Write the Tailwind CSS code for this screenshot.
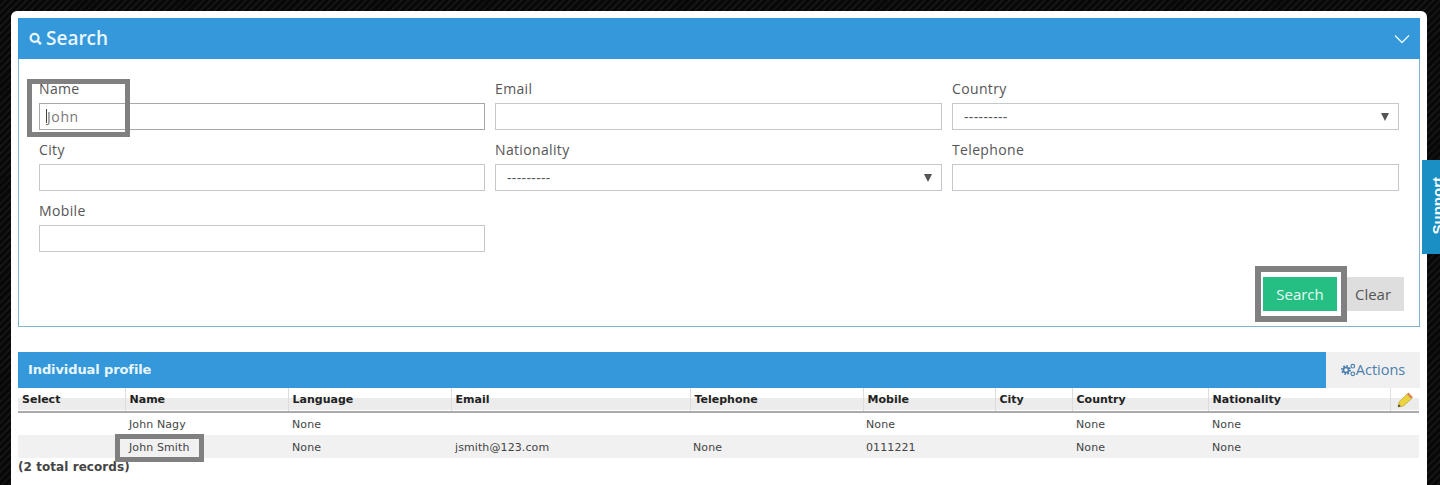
<!DOCTYPE html>
<html lang="en">
<head>
  <meta charset="UTF-8" />
  <meta name="viewport" content="width=device-width, initial-scale=1.0" />
  <title>Individual profile search</title>
  <script src="https://cdn.jsdelivr.net/npm/@tailwindcss/browser@4"></script>
</head>
<body class="bg-[#0a0a0a] bg-[repeating-linear-gradient(135deg,#080808_0px,#080808_3px,#141414_3px,#141414_5px)] font-['Open_Sans',sans-serif]">

  <div class="relative h-[485px] w-[1440px] overflow-hidden pl-[11px] pt-[11px]">
    <div class="h-[474px] w-[1416px] rounded-t-[6px] bg-white px-[7px] pt-[7px]">

      <!-- search panel -->
      <section class="relative h-[309px] w-[1402px] border border-t-0 border-[#7fb3cf]">
        <div class="-ml-px flex h-[41px] w-[1402px] items-center justify-between bg-[#3498db] pl-[11px] pr-[10px] text-[#e8f6fd]">
          <div class="flex items-center gap-[4px]">
            <svg class="h-[13px] w-[13px]" viewBox="0 0 13 13" fill="none" stroke="currentColor">
              <circle cx="5.6" cy="5.8" r="4" stroke-width="2.2" />
              <path d="M8.6 8.8 L12 12.2" stroke-width="2.6" />
            </svg>
            <span class="text-[19px] leading-none font-semibold">Search</span>
          </div>
          <svg class="h-[10px] w-[16px]" viewBox="0 0 16 10" fill="none" stroke="currentColor" stroke-width="1.4">
            <path d="M1 1.5 L8 8.5 L15 1.5" />
          </svg>
        </div>

        <div class="grid grid-cols-[446px_447px_447px] gap-x-[10px] gap-y-[10px] pl-[20px] pt-[20px] text-[14px] leading-[20px] tracking-[.35px] text-[#555]">
          <div>
            <label class="mb-[4px] block">Name</label>
            <div class="h-[27px] border border-[#a3a9ad] bg-white pl-[7px] text-[14px] leading-[26px] tracking-[.6px] text-[#777]">John</div>
          </div>
          <div>
            <label class="mb-[4px] block">Email</label>
            <div class="h-[27px] border border-[#c4c8cc] bg-white"></div>
          </div>
          <div>
            <label class="mb-[4px] block">Country</label>
            <div class="flex h-[27px] items-center justify-between border border-[#c4c8cc] bg-white pl-[11px] pr-[9px] leading-none">
              <span>---------</span>
              <span class="h-0 w-0 border-x-[4px] border-t-[8px] border-x-transparent border-t-[#555]"></span>
            </div>
          </div>
          <div>
            <label class="mb-[4px] block">City</label>
            <div class="h-[27px] border border-[#c4c8cc] bg-white"></div>
          </div>
          <div>
            <label class="mb-[4px] block">Nationality</label>
            <div class="flex h-[27px] items-center justify-between border border-[#c4c8cc] bg-white pl-[11px] pr-[9px] leading-none">
              <span>---------</span>
              <span class="h-0 w-0 border-x-[4px] border-t-[8px] border-x-transparent border-t-[#555]"></span>
            </div>
          </div>
          <div>
            <label class="mb-[4px] block">Telephone</label>
            <div class="h-[27px] border border-[#c4c8cc] bg-white"></div>
          </div>
          <div>
            <label class="mb-[4px] block">Mobile</label>
            <div class="h-[27px] border border-[#c4c8cc] bg-white"></div>
          </div>
        </div>

        <div class="mt-[25px] flex justify-end pr-[15px] text-[15px]">
          <button class="h-[34px] w-[74px] bg-[#26bf83] text-[#e9fbf3]">Search</button>
          <button class="ml-[10px] h-[34px] w-[57px] bg-[#dedede] pr-[5px] text-[#555]">Clear</button>
        </div>
      </section>

      <!-- results -->
      <section class="mt-[25px]">
        <div class="flex h-[36px] w-[1402px]">
          <div class="flex flex-1 items-center bg-[#3498db] pl-[10px] font-['DejaVu_Sans',sans-serif] text-[13px] font-bold tracking-[-.1px] text-[#e8f6fd]">Individual profile</div>
          <div class="flex w-[94px] items-center justify-center bg-[#f0f0f0] pb-[1px] text-[14.5px] text-[#4a7fae]">
            <svg class="h-[14px] w-[15px]" viewBox="0 0 15 14" fill="none" stroke="#4a7fae">
              <circle cx="5" cy="7" r="4.1" stroke-width="1.7" stroke-dasharray="1.6 1.6" />
              <circle cx="5" cy="7" r="2.7" stroke-width="1.8" />
              <circle cx="11.8" cy="3.2" r="1.8" stroke-width="1.2" />
              <circle cx="11.8" cy="10.8" r="1.8" stroke-width="1.2" />
            </svg>
            <span>Actions</span>
          </div>
        </div>

        <table class="w-[1401px] table-fixed border-collapse font-['DejaVu_Sans',sans-serif] text-[11px] tracking-[.1px] text-[#444]">
          <colgroup>
            <col class="w-[107px]" /><col class="w-[163px]" /><col class="w-[163px]" /><col class="w-[239px]" /><col class="w-[173px]" /><col class="w-[132px]" /><col class="w-[77px]" /><col class="w-[136px]" /><col class="w-[182px]" /><col class="w-[29px]" />
          </colgroup>
          <thead>
            <tr class="h-[24px] border-b-2 border-[#aaa] bg-[linear-gradient(#fff_45%,#ececec_45%)] text-left font-bold tracking-normal text-[#222]">
              <th class="pl-[4px] pt-[1px]">Select</th>
              <th class="border-l border-[#ddd] pl-[4px] pt-[1px]">Name</th>
              <th class="border-l border-[#ddd] pl-[4px] pt-[1px]">Language</th>
              <th class="border-l border-[#ddd] pl-[4px] pt-[1px]">Email</th>
              <th class="border-l border-[#ddd] pl-[4px] pt-[1px]">Telephone</th>
              <th class="border-l border-[#ddd] pl-[4px] pt-[1px]">Mobile</th>
              <th class="border-l border-[#ddd] pl-[4px] pt-[1px]">City</th>
              <th class="border-l border-[#ddd] pl-[4px] pt-[1px]">Country</th>
              <th class="border-l border-[#ddd] pl-[4px] pt-[1px]">Nationality</th>
              <th class="border-l border-[#ddd] pl-[6px]">
                <svg class="h-[16px] w-[16px]" viewBox="0 0 16 16">
                  <path d="M1 15 L2.2 9.8 L9.8 2.2 L14.5 6.8 L6.5 14z" fill="#ecd23c" stroke="#a89020" stroke-width=".5" />
                  <path d="M9.8 2.2 L11.5 .6 L16 5.2 L14.5 6.8z" fill="#d9884a" />
                  <path d="M1 15 L1.7 12.3 L3.8 14.2z" fill="#333" />
                </svg>
              </th>
            </tr>
          </thead>
          <tbody>
            <tr class="h-[23px]">
              <td></td><td class="pl-[4px] pt-[2px]">John Nagy</td><td class="pl-[4px] pt-[2px]">None</td><td></td><td></td><td class="pl-[3px] pt-[2px]">None</td><td></td><td class="pl-[4px] pt-[2px]">None</td><td class="pl-[4px] pt-[2px]">None</td><td></td>
            </tr>
            <tr class="h-[23px] bg-[#f1f1f1]">
              <td></td><td class="pl-[4px] pt-[3px]">John Smith</td><td class="pl-[4px] pt-[3px]">None</td><td class="pl-[4px] pt-[3px]">jsmith@123.com</td><td class="pl-[3px] pt-[3px]">None</td><td class="pl-[3px] pt-[3px]">0111221</td><td></td><td class="pl-[4px] pt-[3px]">None</td><td class="pl-[4px] pt-[3px]">None</td><td></td>
            </tr>
          </tbody>
        </table>
        <p class="mt-[1px] font-['DejaVu_Sans',sans-serif] text-[12px] leading-[16px] font-bold tracking-[.06px] text-[#444]">(2 total records)</p>
      </section>
    </div>

    <!-- support tab -->
    <div class="absolute left-[1422px] top-[160px] h-[94px] w-[18px] overflow-hidden bg-[#1a8fc4]">
      <span class="absolute left-[7px] top-[17px] font-['Liberation_Sans',sans-serif] text-[15px] leading-[18px] font-bold text-white [writing-mode:vertical-rl] rotate-180">Support</span>
    </div>

    <!-- annotation boxes -->
    <div class="absolute left-[27px] top-[79px] h-[58px] w-[103px] border-[5px] border-[#808080]"></div>
    <div class="absolute left-[1255px] top-[266px] h-[56px] w-[92px] border-[6px] border-[#808080]"></div>
    <div class="absolute left-[115px] top-[434px] h-[28px] w-[89px] border-[5px] border-[#808080]"></div>
    <div class="absolute left-[46px] top-[109px] h-[14px] w-px bg-[#444]"></div>
  </div>
</body>
</html>
